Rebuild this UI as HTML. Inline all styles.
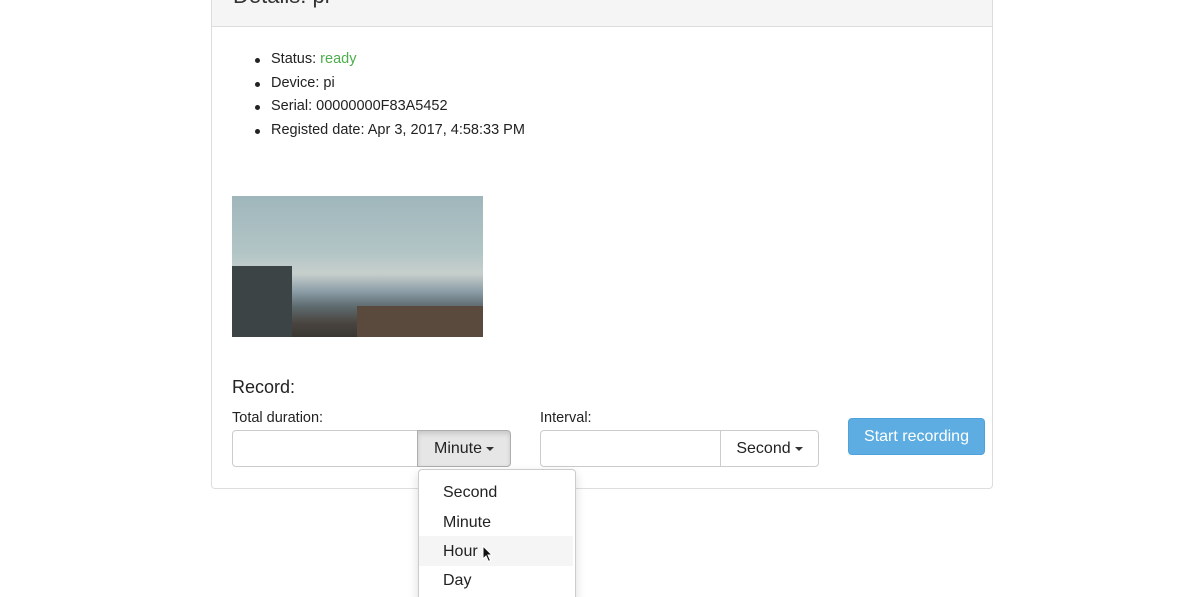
<!DOCTYPE html>
<html style="overflow:hidden;height:597px"><head><style>
body{margin:0;width:1200px;height:597px;background:#fff;font-family:"Liberation Sans",sans-serif;color:#222;position:relative;overflow:hidden}
.a{position:absolute}
.panel{left:211px;top:-5px;width:780px;height:492px;border:1px solid #ddd;border-radius:4px}
.hd{left:212px;top:-5px;width:780px;height:31px;background:#f5f5f5;border-bottom:1px solid #ddd}
.t{font-size:14.5px}
ul{margin:0;padding:0;list-style:none}
li{position:absolute;left:271px;font-size:14.5px}
li:before{content:"";position:absolute;left:-16px;top:7px;width:5px;height:5px;border-radius:50%;background:#222}
.inp{border:1px solid #ccc;border-radius:4px;height:35px;box-sizing:border-box}
.btn{border:1px solid #ccc;box-sizing:border-box;height:37px;font-size:16px;text-align:center;line-height:35px;border-radius:0 4px 4px 0}
.car{display:inline-block;border-left:4px solid transparent;border-right:4px solid transparent;border-top:4px solid #333;vertical-align:middle;margin-left:4px}
.dd{left:418px;top:469px;width:156px;height:140px;border:1px solid #ccc;border-radius:4px;background:#fff;box-shadow:0 4px 10px rgba(0,0,0,.15)}
.dd div{position:absolute;left:24px;font-size:16px}
</style></head><body>
<div class="a panel"></div>
<div class="a hd"><div class="a" style="left:21px;top:-12px;font-size:22px;color:#333">Details: pi</div></div>
<ul>
<li style="top:51px">Status: <span style="color:#4cae4c">ready</span></li>
<li style="top:75px">Device: pi</li>
<li style="top:98px">Serial: 00000000F83A5452</li>
<li style="top:122px">Registed date: Apr 3, 2017, 4:58:33 PM</li>
</ul>
<div class="a" style="left:232px;top:196px;width:251px;height:141px;background:linear-gradient(180deg,#9fb6bb 0%,#b2c5c6 40%,#c7cfcc 55%,#8a9ca6 68%,#5f6c70 78%,#4a4540 90%,#3a3632 100%)">
<div class="a" style="left:0;top:70px;width:60px;height:71px;background:#3d4446"></div>
<div class="a" style="left:125px;top:110px;width:126px;height:31px;background:#5a4a3e"></div>
</div>
<div class="a" style="left:232px;top:377px;font-size:18px">Record:</div>
<div class="a t" style="left:232px;top:410px">Total duration:</div>
<div class="a t" style="left:540px;top:410px">Interval:</div>
<div class="a inp" style="left:232px;top:430px;width:190px;height:37px;border-radius:4px 0 0 4px"></div>
<div class="a btn" style="left:417px;top:430px;width:94px;background:#e6e6e6;border-color:#adadad;box-shadow:inset 0 3px 5px rgba(0,0,0,.125)">Minute<span class="car"></span></div>
<div class="a inp" style="left:540px;top:430px;width:185px;height:37px;border-radius:4px 0 0 4px"></div>
<div class="a btn" style="left:720px;top:430px;width:99px;background:#fff">Second<span class="car"></span></div>
<div class="a" style="left:848px;top:418px;width:137px;height:37px;background:#5dade2;border:1px solid #4fa2dc;box-sizing:border-box;border-radius:4px;color:#fff;font-size:16px;text-align:center;line-height:35px">Start recording</div>
<div class="a dd">
<div style="top:14px">Second</div>
<div style="top:44px">Minute</div>
<div style="top:66px;left:0;width:154px;height:30px;background:#f5f5f5"></div>
<div style="top:73px">Hour</div>
<div style="top:102px">Day</div>
</div>
<svg class="a" style="left:482px;top:545px" width="12" height="18" viewBox="0 0 12 18"><path d="M1 1 L1 14 L4 11 L6.5 16.5 L8.5 15.5 L6 10 L10 10 Z" fill="#111" stroke="#fff" stroke-width="1"/></svg>
</body></html>
